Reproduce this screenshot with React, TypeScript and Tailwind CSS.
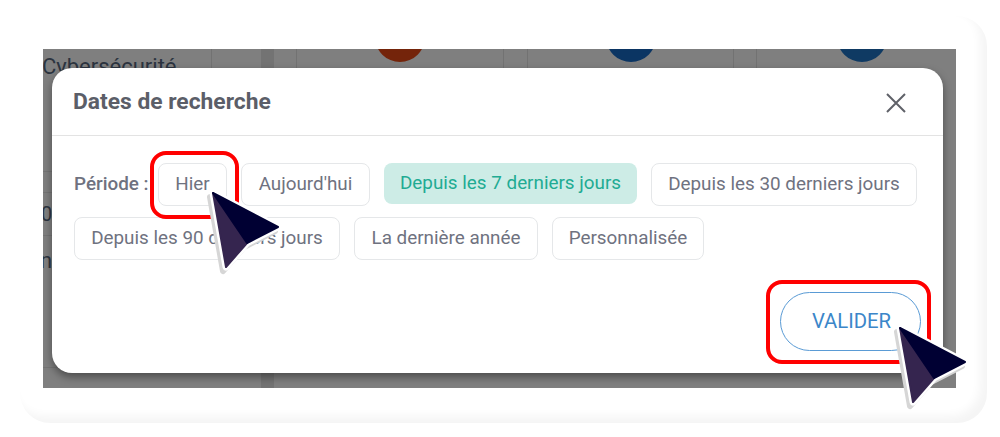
const chipBase = "flex items-center justify-center rounded-lg border border-[#e5e7e9] bg-white h-[43px] text-[18.85px] text-[#6f7280] whitespace-nowrap";

function Cursor({ className }: { className: string }) {
  const shape = "M14 14 L79 48 L48 64 L27 88 Z";
  return (
    <svg viewBox="0 0 90 100" className={className}>
      <path d={shape} transform="translate(-3 4)" fill="#d6d6d6" stroke="#d6d6d6" strokeWidth="6" strokeLinejoin="round" />
      <path d={shape} fill="#ffffff" stroke="#ffffff" strokeWidth="7" strokeLinejoin="round" />
      <path d="M14 14 L27 88 L48 64 Z" fill="#35254f" stroke="#35254f" strokeWidth="2" strokeLinejoin="round" />
      <path d="M14 14 L79 48 L48 64 Z" fill="#000033" stroke="#000033" strokeWidth="2" strokeLinejoin="round" />
    </svg>
  );
}

function Line() {
  return <div className="w-px h-[20px] shrink-0 bg-[#727272]" />;
}

function Dot({ color }: { color: string }) {
  return <div className={"w-[50px] h-[50px] rounded-full -mt-[37px] " + color} />;
}

function Backdrop() {
  return (
    <div className="absolute inset-0 flex items-start">
      <div className="w-[168px] shrink-0 flex flex-col text-[#2c3440]">
        <div className="h-[123px] border-b border-[#747474] pt-[5px] -ml-[1px] text-[22px] leading-[26px] whitespace-nowrap">Cybersécurité</div>
        <div className="h-[21px] border-b border-[#747474]" />
        <div className="h-[43px] border-b border-[#747474] -ml-[2px] flex items-center text-[20px]">0</div>
        <div className="h-[132px] border-b border-[#747474] text-[22px] leading-[26px] -ml-[3px] pt-[12px]">n</div>
      </div>
      <Line />
      <div className="w-[49px] shrink-0" />
      <div className="w-[13px] h-[339px] shrink-0 bg-[#737373]" />
      <div className="w-[22px] shrink-0" />
      <Line />
      <div className="w-[206px] shrink-0 flex justify-center"><Dot color="bg-[#74240a]" /></div>
      <Line />
      <div className="w-[23px] shrink-0" />
      <Line />
      <div className="w-[205px] shrink-0 flex justify-center"><Dot color="bg-[#0b3563]" /></div>
      <Line />
      <div className="w-[22px] shrink-0" />
      <Line />
      <div className="w-[199px] shrink-0 flex justify-center pl-[10px]"><Dot color="bg-[#0f3a63]" /></div>
    </div>
  );
}

export default function App() {
  return (
    <div className="relative w-[1000px] h-[437px] bg-white overflow-hidden pl-[20px] pt-[16px]" style={{ fontFamily: "Roboto, sans-serif" }}>
      <div className="w-[967px] h-[407px] rounded-[30px] bg-white shadow-[inset_-7px_-7px_10px_rgba(0,0,0,0.045)] pl-[23px] pt-[33px]">
        <div className="relative w-[913px] h-[339px] bg-[#7f7f7f] overflow-hidden pt-[19px] pl-[9px]">
          <Backdrop />
          <div className="relative w-[891px] h-[305px] rounded-[20px] bg-white shadow-[0_4px_8px_rgba(0,0,0,0.4)] flex flex-col">
            <div className="h-[68px] border-b border-[#e3e3e3] flex items-center justify-between pl-[21px] pr-[37px] pt-[2px]">
              <span className="text-[22.8px] font-bold text-[#5b5e68]">Dates de recherche</span>
              <svg width="20" height="20" viewBox="0 0 20 20" fill="none" stroke="#5f6168" strokeWidth="2">
                <path d="M1 1 L19 19 M19 1 L1 19" />
              </svg>
            </div>
            <div className="pl-[22px] pt-[27px] pr-[26px] flex flex-col gap-[11px]">
              <div className="flex items-start">
                <span className="h-[43px] flex items-center text-[18.85px] font-medium text-[#6f7280] w-[85px] whitespace-nowrap">Période :</span>
                <div className="flex items-start gap-[14px]">
                  <div className={chipBase + " w-[69px]"}>Hier</div>
                  <div className={chipBase + " w-[129px]"}>Aujourd'hui</div>
                  <div className="flex items-center justify-center rounded-lg bg-[#cdece6] w-[253px] h-[41px] text-[18.85px] text-[#21ab93] whitespace-nowrap">Depuis les 7 derniers jours</div>
                  <div className={chipBase + " w-[266px]"}>Depuis les 30 derniers jours</div>
                </div>
              </div>
              <div className="flex gap-[14px]">
                <div className={chipBase + " w-[266px]"}>Depuis les 90 derniers jours</div>
                <div className={chipBase + " w-[184px]"}>La dernière année</div>
                <div className={chipBase + " w-[152px]"}>Personnalisée</div>
              </div>
            </div>
            <div className="flex justify-end pr-[22px] pt-[32px]">
              <div className="flex items-center justify-center w-[141px] h-[59px] rounded-full border border-[#5a9bd5] text-[20.3px] text-[#3b86c9] pl-[2px]">VALIDER</div>
            </div>
          </div>
        </div>
      </div>
      <div className="absolute left-[150px] top-[151px] w-[89px] h-[68px] rounded-[16px] border-4 border-[#ff0000]" />
      <div className="absolute left-[766px] top-[280px] w-[165px] h-[84px] rounded-[16px] border-4 border-[#ff0000]" />
      <Cursor className="absolute left-[199px] top-[179px] w-[90px] h-[100px]" />
      <Cursor className="absolute left-[886px] top-[314px] w-[90px] h-[100px]" />
    </div>
  );
}
